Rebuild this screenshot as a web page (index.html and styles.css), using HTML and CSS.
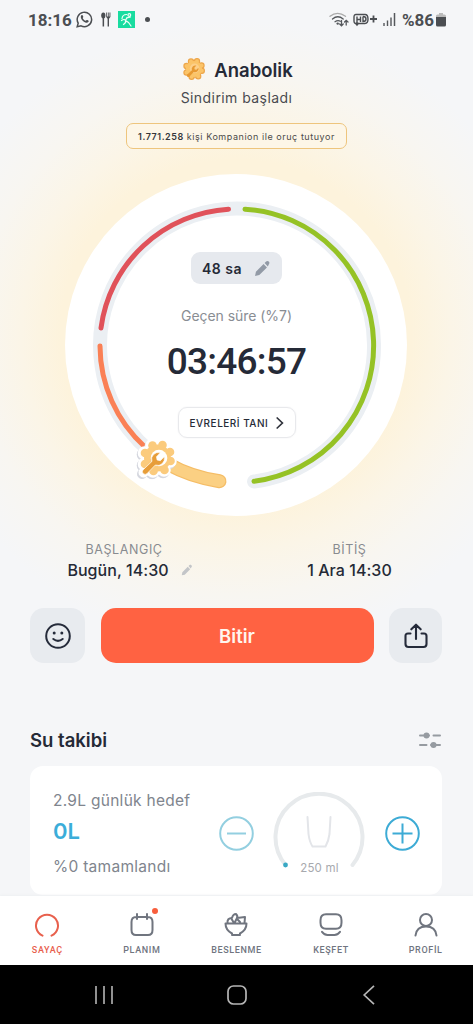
FILE: index.html
```html
<!DOCTYPE html>
<html lang="tr">
<head>
<meta charset="utf-8">
<meta name="viewport" content="width=device-width, initial-scale=1">
<title>Sayaç</title>
<link rel="stylesheet" href="styles.css">
</head>
<body>
<svg width="0" height="0" class="defs">
  <defs>
    <symbol id="pencil" viewBox="0 0 16 16"><path d="M1 15l.8-4L9 3.800l3.200 3.200L5 14.200zM10 2.800l1.400-1.400c.8-.8 1.800-.6 2.500.1s.9 1.700.1 2.500L13 6z"/></symbol>
    <symbol id="gear" viewBox="-20 -20 40 40">
      <g>
        <circle r="13.500"/><circle cx="13" cy="3" r="4.300"/><circle cx="7" cy="12" r="4.300"/><circle cx="-4" cy="13" r="4.300"/><circle cx="-12.500" cy="6" r="4.300"/><circle cx="-12.500" cy="-5" r="4.300"/><circle cx="-5" cy="-12.500" r="4.300"/><circle cx="5" cy="-13" r="4.300"/><circle cx="12.500" cy="-6" r="4.300"/>
      </g>
    </symbol>
    <symbol id="wrench" viewBox="0 0 24 24"><path d="M2.500 19.500l8.500-8a6.300 6.300 0 0 1 7.800-8l-3.600 3.700.6 3 3 .6 3.500-3.700a6.300 6.300 0 0 1-8.200 7.700l-7.700 8a2.600 2.600 0 0 1-3.900-3.300z"/></symbol>
  </defs>
</svg>
<div class="screen">
  <header class="status">
    <span class="clock">18:16</span>
    <svg class="s-wa" width="17" height="17" viewBox="0 0 17 17"><path d="M1.200 15.800l1-3.700a7.200 7.200 0 1 1 2.800 2.700z" fill="none" stroke="#4b4e52" stroke-width="1.500"/><path d="M5.200 4.400c.9-.8 1.500-.4 1.800.5.4 1 .3 1.200-.3 2 .6 1.300 1.700 2.300 3 2.900.8-1 1.100-1.100 2.200-.5 1.100.5 1 1 .4 1.700-1 1.200-3.200.8-5-.8C5.300 8.500 4 6 5.200 4.400z" fill="#4b4e52"/></svg>
    <svg class="s-fork" width="10" height="15" viewBox="0 0 10 15"><g fill="#4b4e52"><ellipse cx="2.300" cy="3.400" rx="2.100" ry="3"/><rect x="1.600" y="5" width="1.500" height="9.500"/><path d="M5.200.5h.9v4h.8v-4h.8v4h.8v-4h.9v4.600L8 6.700v7.800H6.600V6.700L5.200 5.100z"/></g></svg>
    <svg class="s-run" width="17" height="17" viewBox="0 0 17 17"><rect width="17" height="17" fill="#19dca0"/><g fill="none" stroke="#effff8" stroke-width="1.200" stroke-linecap="round"><circle cx="11.300" cy="4" r="1.400"/><path d="M4 7.500q.5-4 4.500-4M9 6.500L7.500 9.500l3 2L13 15M3.500 9.500q3-2 4 0t-2 4M9 7l3.500-1"/></g></svg>
    <i class="s-dot"></i>
    <span class="grow"></span>
    <svg class="s-wifi" width="20" height="16" viewBox="0 0 20 16"><g fill="none" stroke-width="1.300" stroke-linecap="round"><path d="M1 4.300Q8.500-1.500 16.500 4.300" stroke="#aaa"/><path d="M3.500 7Q8.800 2.500 14.200 7M6 9.700q2.800-2 5.400-.5" stroke="#55585c"/><path d="M12.500 8.500v5M10.700 12l1.800 1.800 1.700-1.800M17.200 13V8.500M15.500 10l1.700-1.700L19 10" stroke="#55585c"/></g><circle cx="8.700" cy="11.600" r="1.200" fill="#55585c"/></svg>
    <svg class="s-hd" width="24" height="14" viewBox="0 0 24 14"><g fill="none" stroke="#4b4e52" stroke-width="1.400"><path d="M3 1.500h9q3 0 3 4.500t-3 4.500H3q-2 0-2-2.500V4q0-2.500 2-2.500z"/><path d="M4 3.500v8.500M7.500 3.500v5.500M4 6.500h3.500M10 3.500v5q3 0 3-2.500t-3-2.500M2.500 10l1.500 2 1.500-2"/><path d="M17 6h7M20.500 2.500v7" stroke-width="1.800"/></g></svg>
    <svg class="s-sig" width="13" height="13" viewBox="0 0 13 13"><path d="M1 13v-3M4.500 13V7.500M8 13V4.500" stroke="#55585c" stroke-width="1.400"/><path d="M11.500 13V0" stroke="#55585c" stroke-width="1.500"/></svg>
    <span class="pct">%86</span>
    <svg class="s-bat" width="10" height="14" viewBox="0 0 10 14"><path d="M3 0h4v1.500h1.500Q10 1.500 10 3v1.500H0V3q0-1.500 1.500-1.500H3z" fill="#bbb"/><path d="M0 4h10v8q0 1.500-1.500 1.500h-7Q0 13.500 0 12z" fill="#4b4e52"/></svg>
  </header>

  <section class="phase">
    <h1 class="phase-title">
      <svg width="24" height="24" viewBox="-20 -20 40 40"><use href="#gear" x="-20" y="-20" width="40" height="40" fill="#fbc468" stroke="#eda64a" stroke-width="2"/><circle r="13.500" fill="#fbc468"/><circle cx="1" cy="-1" r="8" fill="#fdd08a"/><use href="#wrench" x="-14" y="-9" width="23" height="23" fill="#e89a32"/></svg>
      <span>Anabolik</span>
    </h1>
    <p class="phase-sub">Sindirim başladı</p>
    <p class="people"><b>1.771.258</b> kişi Kompanion ile oruç tutuyor</p>
  </section>

  <section class="dial">
    <svg class="ring" width="342" height="342" viewBox="65 174 342 342" fill="none" stroke-linecap="round">
      <path d="M175 467.700A137 137 0 1 1 254 481.500" stroke="#ebeff3" stroke-width="14"/>
      <path d="M245 209.200A136.650 136.650 0 0 1 254 481.200" stroke="#95c225" stroke-width="5"/>
      <path d="M101 328A137 137 0 0 1 228.500 209.200" stroke="#e0525a" stroke-width="5"/>
      <path d="M100 346A137 137 0 0 0 145 447" stroke="#fa8055" stroke-width="5"/>
      <path d="M168 464Q191 477 219.500 481.200" stroke="#f5bd66" stroke-width="14"/>
      <path d="M168 464Q191 477 219.500 481.200" stroke="#fbd083" stroke-width="11.500"/>
      <use href="#gear" x="136" y="439.500" width="40" height="40" fill="#d5d7df" stroke="#d5d7df" stroke-width="5"/>
      <path d="M142 474l9-8" stroke="#d5d7df" stroke-width="10"/>
      <use href="#gear" x="137" y="438" width="40" height="40" fill="#fff" stroke="#fff" stroke-width="5"/>
      <path d="M143.500 472.500l9-8" stroke="#fff" stroke-width="10"/>
      <use href="#gear" x="137.500" y="438" width="40" height="40" fill="#fbcb7d"/>
      <circle cx="159" cy="458" r="8.300" fill="#fff"/>
      <use href="#wrench" x="140" y="449" width="26" height="26" fill="#e79d39" stroke="#fff" stroke-width=".6"/>
    </svg>
    <div class="dial-body">
      <div class="goal">48 sa <svg width="17" height="17" fill="#929aa6"><use href="#pencil"/></svg></div>
      <div class="elapsed-label">Geçen süre (%7)</div>
      <div class="elapsed">03:46:57</div>
      <div class="stages">EVRELERİ TANI <svg width="8" height="12" viewBox="0 0 8 12"><path d="M1.200 1l5.200 5-5.200 5" fill="none" stroke="#30333c" stroke-width="1.700" stroke-linecap="round"/></svg></div>
    </div>
  </section>

  <section class="times">
    <div class="time start"><span class="t-label">BAŞLANGIÇ</span><span class="t-val">Bugün, 14:30 <svg width="12" height="12" fill="#c3c5c8"><use href="#pencil"/></svg></span></div>
    <div class="time end"><span class="t-label">BİTİŞ</span><span class="t-val">1 Ara 14:30</span></div>
  </section>

  <section class="actions">
    <div class="sq"><svg width="26" height="26" viewBox="0 0 26 26" fill="none" stroke="#252b3a" stroke-width="2" stroke-linecap="round"><circle cx="13" cy="13" r="11.800"/><path d="M8.300 16q4.700 3.800 9.400 0"/><g fill="#252b3a" stroke="none"><circle cx="9.200" cy="10" r="1.500"/><circle cx="16.800" cy="10" r="1.500"/></g></svg></div>
    <div class="finish">Bitir</div>
    <div class="sq"><svg width="24" height="26" viewBox="0 0 24 26" fill="none" stroke="#252b3a" stroke-width="2.100" stroke-linecap="round" stroke-linejoin="round"><path d="M12 16V2M7.300 6.300L12 1.700l4.700 4.600M6.500 10.500H4Q1.500 10.500 1.500 13v8Q1.500 24 4.500 24h15q3 0 3-3v-8q0-2.500-2.500-2.500h-2.500"/></svg></div>
  </section>

  <section class="water">
    <div class="water-head"><h2>Su takibi</h2><svg width="22" height="18" viewBox="0 0 22 18"><path d="M1 4.500h9M14.500 4.500H21M1 14h6.500M12 14h9" stroke="#969ba1" stroke-width="2" stroke-linecap="round"/><circle cx="7.500" cy="4.500" r="3" fill="#969ba1"/><circle cx="14.500" cy="14" r="3" fill="#969ba1"/></svg></div>
    <div class="card">
      <div class="water-text"><span class="w1">2.9L günlük hedef</span><span class="w2">0L</span><span class="w3">%0 tamamlandı</span></div>
      <svg class="minus" width="35" height="35" viewBox="0 0 35 35" fill="none" stroke="#93cfe0" stroke-width="2"><circle cx="17.500" cy="17.500" r="16.300"/><path d="M8 17.500h19"/></svg>
      <div class="cup"><svg width="92" height="80" viewBox="0 0 92 80" fill="none" stroke-linecap="round"><path d="M12.500 73A43.500 43.500 0 1 1 79.500 73" stroke="#e7eaec" stroke-width="4"/><path d="M34.500 25l1 17q1 8 4 12.500h13q3-5 4-12.500l1-17" stroke="#e3e5e9" stroke-width="2"/><circle cx="12.500" cy="73" r="2.400" fill="#39a8c4"/></svg><span>250 ml</span></div>
      <svg class="plus" width="35" height="35" viewBox="0 0 35 35" fill="none" stroke="#3dabd5" stroke-width="2"><circle cx="17.500" cy="17.500" r="16.300"/><path d="M7.500 17.500h20M17.500 7.500v20"/></svg>
    </div>
  </section>

  <nav class="tabs">
    <div class="tab on"><svg width="26" height="26" viewBox="0 0 26 26"><path d="M8.500 23.700a11 11 0 1 1 9 0"/></svg><span>SAYAÇ</span></div>
    <div class="tab"><svg width="26" height="26" viewBox="0 0 26 26"><path d="M7 5h12q4.500 0 4.500 5v8q0 5-4.500 5H7q-4.500 0-4.500-5v-8q0-5 4.500-5zM8 2v5M18 2v5"/></svg><i class="badge"></i><span>PLANIM</span></div>
    <div class="tab"><svg width="26" height="26" viewBox="0 0 26 26"><path d="M2.500 11.500h21q0 6.500-6.500 10v1.500H9v-1.500q-6.500-3.500-6.500-10zM4.500 11q-.5-5 4.500-5 1-4 4-4 2 2 1 4M8 6l3 5M12 10l2-4 8-1-.5 6M14 7l3 3"/></svg><span>BESLENME</span></div>
    <div class="tab"><svg width="26" height="26" viewBox="0 0 26 26"><path d="M8 2.200h10q5.500 0 5.500 6v2.500q0 6-5.500 6H8q-5.500 0-5.500-6V8.200q0-6 5.500-6zM4 19.800q2.500 3.200 5.500 3.200h7q3 0 5.500-3.200"/></svg><span>KEŞFET</span></div>
    <div class="tab"><svg width="26" height="26" viewBox="0 0 26 26"><circle cx="13" cy="8" r="6"/><path d="M2.500 23.500q1-9 10.500-9t10.500 9"/></svg><span>PROFİL</span></div>
  </nav>

  <footer class="sysnav">
    <svg width="20" height="20" viewBox="0 0 20 20"><path d="M2 1v18M10 1v18M18 1v18" stroke="#aaa" stroke-width="1.700"/></svg>
    <svg width="20" height="20" viewBox="0 0 20 20"><rect x="1" y="1" width="18" height="18" rx="5.500" fill="none" stroke="#b5b5b5" stroke-width="1.700"/></svg>
    <svg width="20" height="20" viewBox="0 0 20 20"><path d="M15 .8L5.200 10l9.800 9.200" fill="none" stroke="#b5b5b5" stroke-width="1.700"/></svg>
  </footer>
</div>
</body>
</html>
```
FILE: styles.css
```css
* { box-sizing: border-box; margin: 0; padding: 0; }
body { font-family: Inter, "Noto Sans", sans-serif; color: #252a37; background: #f5f6f8; overflow: hidden; }
svg { display: block; flex: none; }
.defs { position: absolute; }
.screen { width: 473px; height: 1024px; display: flex; flex-direction: column; white-space: nowrap;
  background: radial-gradient(circle at 236px 335px, #fdf3dc 0, #fdf3dc 175px, #fbf5e7 215px, #f8f6f1 260px, #f5f6f8 315px); }
.grow { flex: 1; }

.status { height: 38px; display: flex; align-items: center; padding: 1px 27px 0 28px; font: 700 17px/20px Roboto, sans-serif; color: #4b4e52; }
.clock { width: 43px; }
.s-wa { margin-left: 5px; }
.s-fork { margin-left: 8px; }
.s-run { margin-left: 7px; }
.s-dot { width: 5px; height: 5px; border-radius: 50%; background: #4b4e52; margin-left: 10px; }
.s-wifi { margin-right: 4px; }
.s-hd { margin-right: 6px; }
.s-sig { margin-right: 6px; }
.pct { width: 33px; }
.s-bat { margin: 0 0 0 1px; }

.phase { height: 136px; padding-top: 19px; display: flex; flex-direction: column; align-items: center; }
.phase-title { display: flex; align-items: center; gap: 8px; height: 24px; font-size: 18.500px; line-height: 24px; font-weight: 600; padding-left: 2px; }
.phase-title span { padding-top: 1px; }
.phase-sub { margin-top: 7px; font-size: 14px; line-height: 20px; letter-spacing: .43px; color: #494b50; }
.people { margin-top: 15px; width: 221px; height: 26px; border: 1.500px solid #eec57d; border-radius: 7px; text-align: center; font-size: 9px; line-height: 25px; letter-spacing: .55px; color: #4c4b49; background: #fdf6e7; }
.people b { font-weight: 600; color: #35363a; }

.dial { width: 342px; height: 342px; margin-left: 65px; border-radius: 50%; background: #fff; display: grid; }
.ring, .dial-body { grid-area: 1 / 1; }
.dial-body { display: flex; flex-direction: column; align-items: center; padding-top: 78px; padding-left: 1px; }
.goal { width: 91px; height: 32px; border-radius: 9px; background: #e6e9ee; display: flex; align-items: center; justify-content: space-between; padding: 0 11px; font-size: 14px; font-weight: 600; letter-spacing: .5px; }
.elapsed-label { margin-top: 22px; font-size: 14px; line-height: 20px; color: #898d93; letter-spacing: -.05px; }
.elapsed { margin-top: 14px; font: 500 37px/44px Roboto, sans-serif; letter-spacing: -.75px; color: #252a37; }
.stages { margin-top: 23px; width: 118px; height: 31px; border: 1px solid #e8e9ec; border-radius: 9px; box-shadow: 0 0 2px #f0f0f2; display: flex; align-items: center; justify-content: space-between; padding: 1px 11px 0; font-size: 10px; font-weight: 500; letter-spacing: .5px; }

.times { height: 92px; display: flex; padding-top: 25px; }
.time { display: flex; flex-direction: column; align-items: center; }
.start { width: 248px; }
.end { width: 203px; }
.t-label { font-size: 12.500px; line-height: 18px; letter-spacing: .6px; color: #888b90; }
.t-val { display: flex; align-items: center; font-size: 16px; line-height: 22px; font-weight: 500; gap: 12px; letter-spacing: .05px; }
.start .t-val { padding-left: 12px; }

.actions { display: flex; gap: 15.500px; height: 55px; padding: 0 31px 0 30px; }
.sq { width: 55px; border-radius: 14px; background: #e8ebef; display: grid; place-items: center; }
.sq:last-child { width: 53px; }
.finish { flex: 1; border-radius: 15px; background: #ff6242; color: #fff5ee; display: grid; place-items: center; font-size: 18.500px; font-weight: 600; padding-top: 1px; }

.water { height: 233px; padding: 64px 31px 0 30px; overflow: hidden; }
.water-head { display: flex; justify-content: space-between; align-items: center; height: 26px; padding-right: 1px; }
.water-head h2 { font-size: 18.500px; line-height: 26px; font-weight: 600; }
.card { margin-top: 13px; height: 129px; border-radius: 13px; background: #fff; display: flex; align-items: flex-start; padding: 23px 22px 0 23px; }
.water-text { display: flex; flex-direction: column; width: 166px; color: #80858e; font-size: 15.500px; line-height: 24px; letter-spacing: .28px; }
.w2 { color: #3badd9; font-size: 22px; font-weight: 600; line-height: 30px; margin-top: 3px; letter-spacing: 0; }
.w3 { margin-top: 9px; }
.minus, .plus { margin-top: 27px; }
.cup { width: 92px; margin: 3px 20px 0 19px; display: grid; }
.cup svg, .cup span { grid-area: 1 / 1; }
.cup span { align-self: end; justify-self: center; font-size: 11.500px; line-height: 14px; color: #a7a9ae; letter-spacing: .2px; margin: 0 0 -3px 1px; }

.tabs { height: 69px; background: #fff; display: flex; box-shadow: 0 -1px 2px #eef0f2; }
.tab { flex: 1; position: relative; display: flex; flex-direction: column; align-items: center; padding-top: 16px; font: 500 9px/12px Roboto, sans-serif; letter-spacing: .65px; color: #70757f; }
.tab svg { fill: none; stroke: #70757f; stroke-width: 2; stroke-linecap: round; stroke-linejoin: round; }
.tab span { margin-top: 6px; }
.tab.on { color: #e8604d; }
.tab.on svg { stroke: #e8604d; }
.badge { position: absolute; width: 6px; height: 6px; border-radius: 50%; background: #f85e3c; top: 12px; left: 57px; }

.sysnav { height: 59px; background: #000; display: flex; align-items: center; justify-content: space-between; padding: 0 94px; }
```
